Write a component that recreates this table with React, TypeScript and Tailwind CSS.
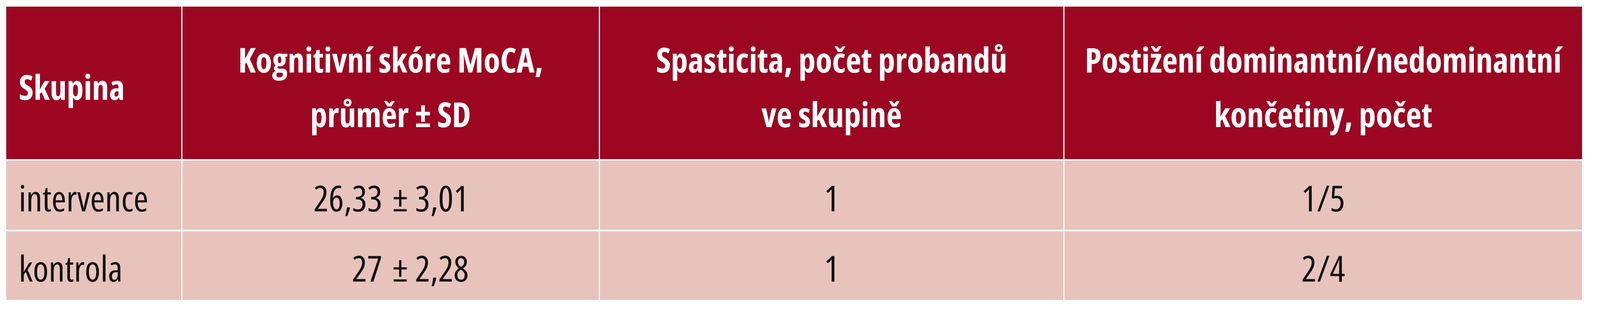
const headers = [
  { lines: ['Skupina'], align: 'left' },
  { lines: ['Kognitivní skóre MoCA,', 'průměr ± SD'], align: 'center' },
  { lines: ['Spasticita, počet probandů', 've skupině'], align: 'center' },
  { lines: ['Postižení dominantní/nedominantní', 'končetiny, počet'], align: 'center' },
];

const rows = [
  { group: 'intervence', mean: '26,33', sd: '3,01', spasticity: '1', side: '1/5' },
  { group: 'kontrola', mean: '27', sd: '2,28', spasticity: '1', side: '2/4' },
];

export default function App() {
  return (
    <div className="h-[800px] overflow-hidden bg-white pt-[17px] pl-[16px] font-['Open_Sans',sans-serif] font-stretch-[75%] leading-[140px]">
      <div className="grid grid-cols-[448px_1066px_1186px_1325px] gap-x-[3px] gap-y-[4px]">
        {headers.map((h, i) => (
          <div
            key={i}
            className={`flex h-[391px] flex-col justify-center bg-[#9d0621] pt-[18px] text-[87px] font-bold whitespace-nowrap text-white ${
              h.align === 'left' ? 'items-start pl-[32px]' : 'items-center text-center'
            }`}
          >
            {h.lines.map((l) => (
              <span key={l}>{l}</span>
            ))}
          </div>
        ))}

        {rows.map((r, i) => (
          <div key={r.group} className="contents text-[92px] text-[#111]">
            <div className={`flex items-center bg-[#e8c3bb] pt-[12px] pl-[32px] ${i === 0 ? 'h-[177px]' : 'h-[176px]'}`}>
              {r.group}
            </div>
            <div className="flex items-center bg-[#e8c3bb] pt-[12px]">
              <span className="w-[512px] text-right">{r.mean}</span>
              <span className="ml-[26px]">±</span>
              <span className="ml-[18px]">{r.sd}</span>
            </div>
            <div className="flex items-center justify-center bg-[#e8c3bb] pt-[12px]">{r.spasticity}</div>
            <div className="flex items-center justify-center bg-[#e8c3bb] pt-[12px]">{r.side}</div>
          </div>
        ))}
      </div>
    </div>
  );
}
